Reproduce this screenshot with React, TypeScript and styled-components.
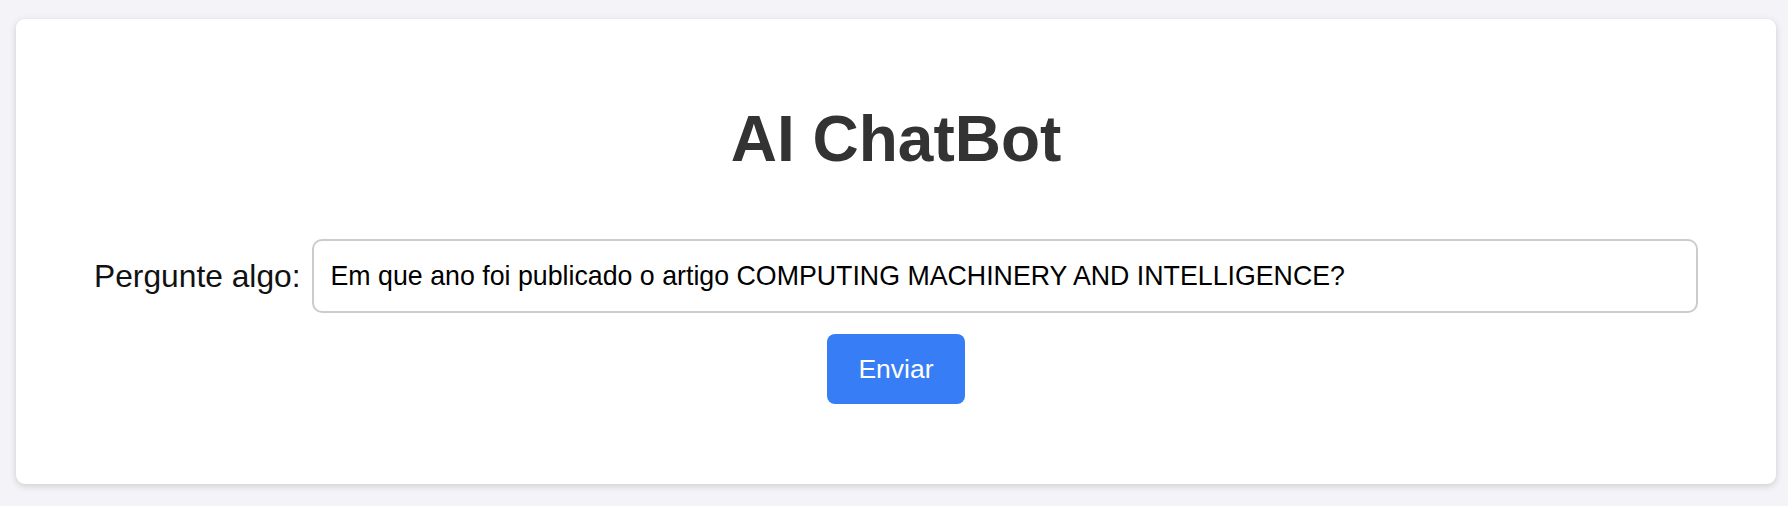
import { useState } from 'react';
import styled, { createGlobalStyle } from 'styled-components';

const GlobalStyle = createGlobalStyle`
  html, body {
    margin: 0;
    padding: 0;
    background: #f4f4f8;
    font-family: 'Liberation Sans', Arial, Helvetica, sans-serif;
  }

  * {
    box-sizing: border-box;
  }
`;

const Page = styled.div`
  padding: 19px 12px 22px 16px;
`;

const Card = styled.main`
  width: 1760px;
  height: 465px;
  background: #fff;
  border-radius: 9px;
  box-shadow: 0 2px 7px rgba(0, 0, 0, 0.16);
  padding: 83px 78px 0;
  display: flex;
  flex-direction: column;
  align-items: center;
`;

const Title = styled.h1`
  margin: 0 0 63px;
  font-size: 64px;
  font-weight: 700;
  color: #333;
  line-height: normal;
`;

const Form = styled.form`
  width: 100%;
  display: flex;
  flex-direction: column;
  align-items: center;
  gap: 21px;
`;

const Row = styled.div`
  width: 100%;
  display: flex;
  align-items: center;
  gap: 11px;
`;

const Label = styled.label`
  font-size: 31.75px;
  color: #111;
  white-space: nowrap;
`;

const Input = styled.input`
  flex: 1;
  height: 74px;
  font-family: inherit;
  font-size: 26.75px;
  color: #000;
  padding: 0 17px;
  border: 2px solid #ccc;
  border-radius: 10px;
  outline: none;
  background: #fff;
`;

const Button = styled.button`
  height: 70px;
  padding: 0 31px;
  font-family: inherit;
  font-size: 26.5px;
  color: #fff;
  background: #377df6;
  border: none;
  border-radius: 8px;
  cursor: pointer;
`;

const App = () => {
  const [question, setQuestion] = useState(
    'Em que ano foi publicado o artigo COMPUTING MACHINERY AND INTELLIGENCE?'
  );

  return (
    <>
      <GlobalStyle />
      <Page>
        <Card>
          <Title>AI ChatBot</Title>
          <Form onSubmit={(e) => e.preventDefault()}>
            <Row>
              <Label htmlFor="question">Pergunte algo:</Label>
              <Input
                id="question"
                value={question}
                onChange={(e) => setQuestion(e.target.value)}
              />
            </Row>
            <Button type="submit">Enviar</Button>
          </Form>
        </Card>
      </Page>
    </>
  );
};

export default App;
